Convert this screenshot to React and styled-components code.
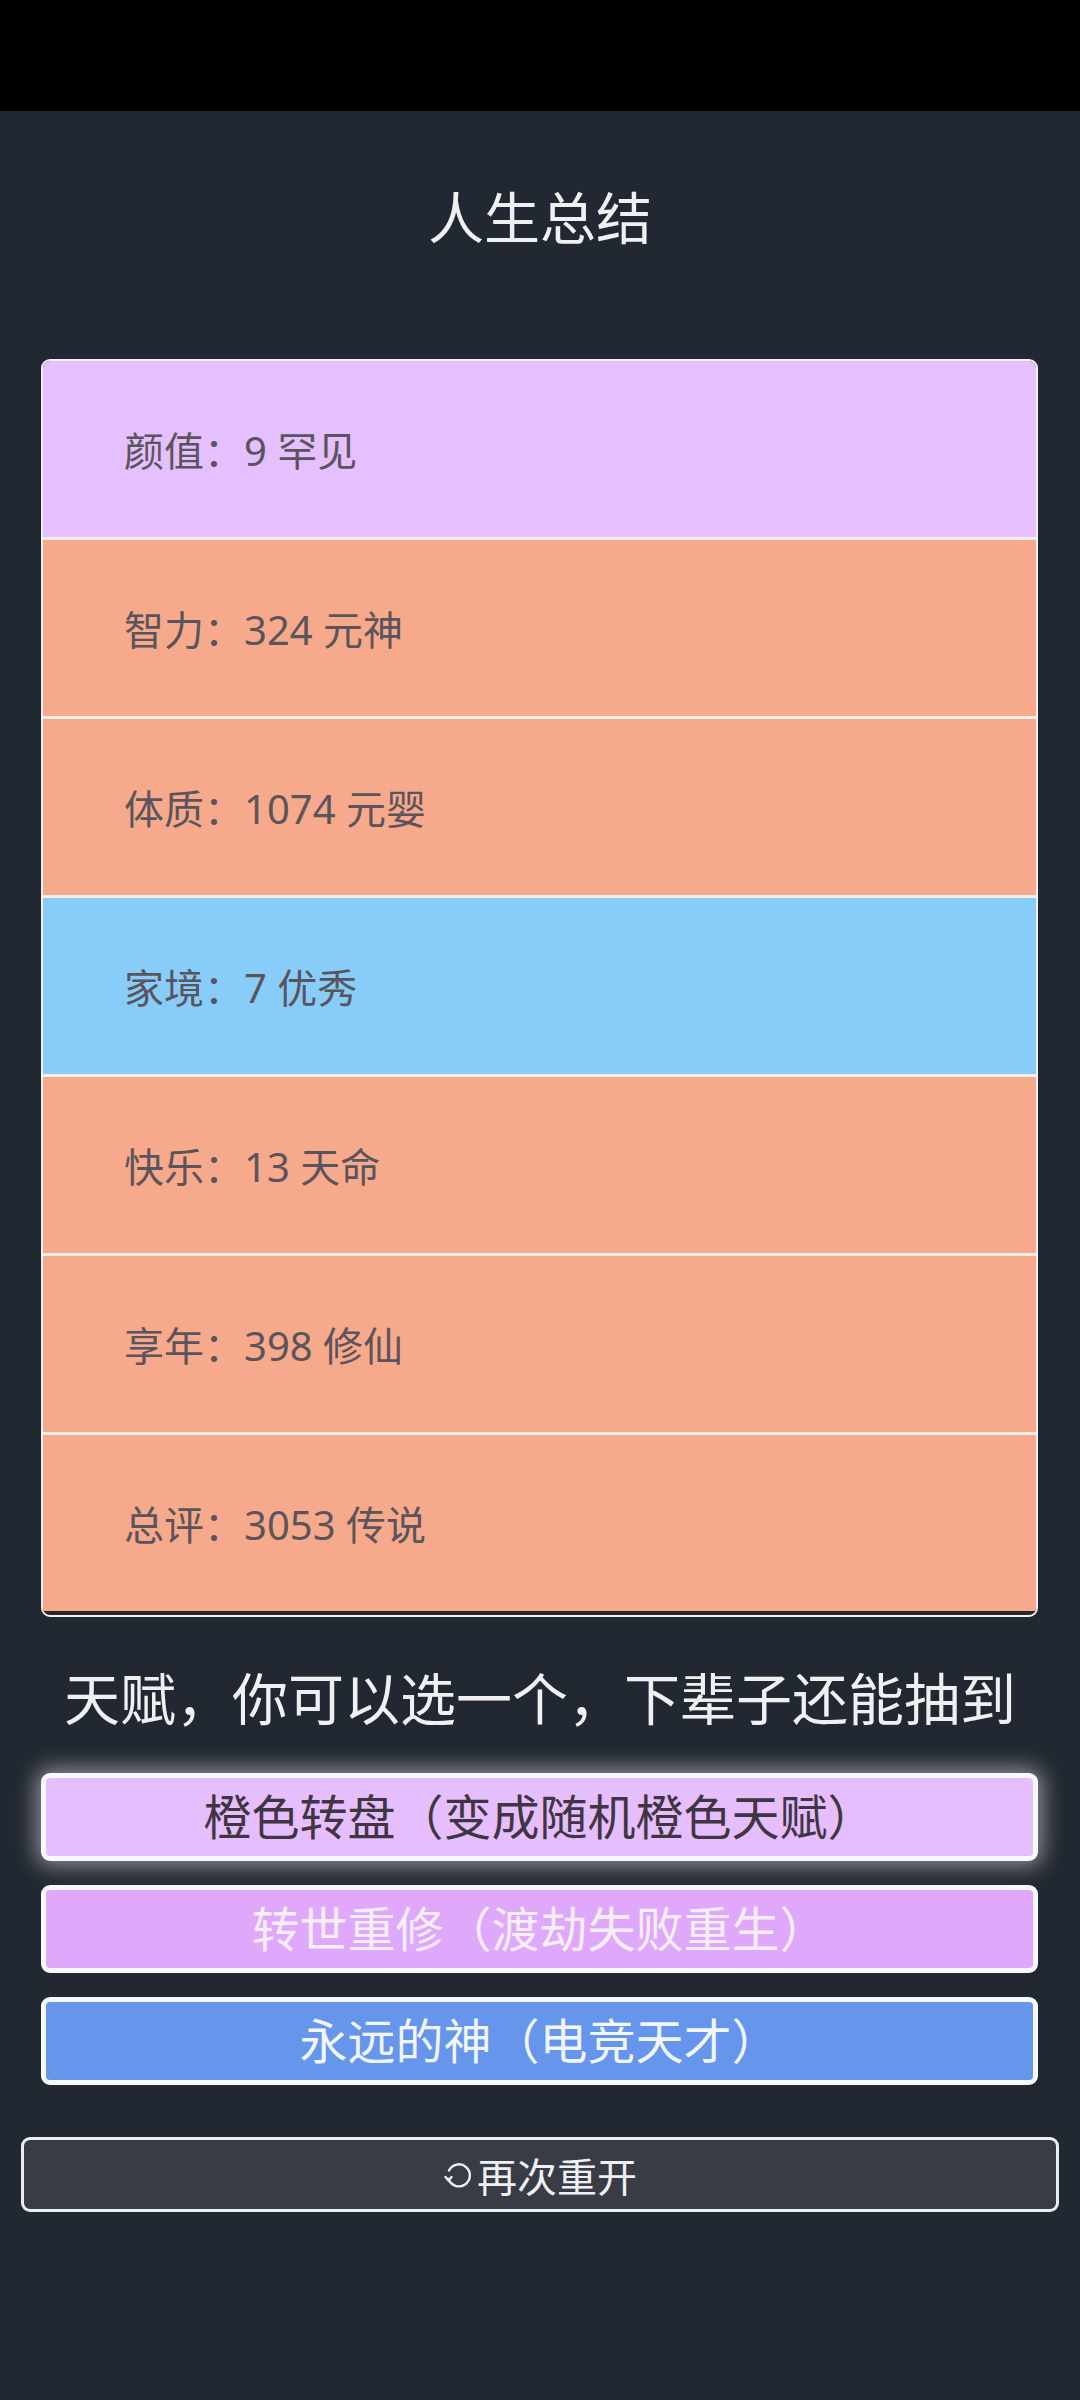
import React from "react";
import styled, { createGlobalStyle } from "styled-components";

const GlobalStyle = createGlobalStyle`
  body {
    margin: 0;
    background: #222831;
    font-family: "Noto Sans", "Noto Sans CJK SC", sans-serif;
  }
`;

const Page = styled.div`
  min-height: 2400px;
  background: #222831;
  display: flex;
  flex-direction: column;
`;

const StatusBar = styled.div`
  height: 111px;
  background: #000;
`;

const Title = styled.h1`
  margin: 74px 0 0;
  height: 64px;
  line-height: 64px;
  text-align: center;
  font-size: 56px;
  font-weight: 400;
  color: #f0f0f2;
`;

const Card = styled.ul`
  list-style: none;
  margin: 110px 42px 0 41px;
  padding: 0 0 4px;
  border: 2px solid #eef0f4;
  border-radius: 9px;
  background: #2a2728;
  overflow: hidden;
`;

const Row = styled.li`
  height: 176px;
  display: flex;
  align-items: center;
  padding-left: 81px;
  background: ${({ $bg }) => $bg};
  color: #5a545c;
  font-size: 40px;
  & + & {
    border-top: 3px solid #f4ede9;
  }
`;

const Subtitle = styled.h2`
  margin: 49px 0 0;
  height: 64px;
  line-height: 64px;
  text-align: center;
  font-size: 56px;
  font-weight: 400;
  color: #f0f0f2;
`;

const Talents = styled.div`
  display: flex;
  flex-direction: column;
  gap: 24px;
  margin: 43px 42px 0 41px;
`;

const Talent = styled.button`
  height: 88px;
  box-sizing: border-box;
  border: 5px solid #f7f8fb;
  border-radius: 9px;
  background: ${({ $bg }) => $bg};
  color: ${({ $fg }) => $fg};
  font-family: inherit;
  font-size: 48px;
  line-height: 1;
  padding: 0;
  box-shadow: ${({ $glow }) =>
    $glow ? "0 0 22px 4px rgba(240, 240, 250, 0.55)" : "none"};
`;

const Restart = styled.button`
  margin: 52px 21px 0;
  height: 75px;
  box-sizing: border-box;
  border: 3px solid #e9eef2;
  border-radius: 9px;
  background: #393c45;
  color: #eef1f4;
  font-family: inherit;
  font-size: 40px;
  display: flex;
  align-items: center;
  justify-content: center;
  gap: 4px;
  padding: 0;
`;

const stats = [
  { label: "颜值", value: "9 罕见", bg: "#e6bffe" },
  { label: "智力", value: "324 元神", bg: "#f7aa8b" },
  { label: "体质", value: "1074 元婴", bg: "#f7aa8b" },
  { label: "家境", value: "7 优秀", bg: "#88cdf9" },
  { label: "快乐", value: "13 天命", bg: "#f7aa8b" },
  { label: "享年", value: "398 修仙", bg: "#f7aa8b" },
  { label: "总评", value: "3053 传说", bg: "#f7aa8b" },
];

const talents = [
  { name: "橙色转盘（变成随机橙色天赋）", bg: "#e6befd", fg: "#3f3641", glow: true },
  { name: "转世重修（渡劫失败重生）", bg: "#e0a8fb", fg: "#f4eef7" },
  { name: "永远的神（电竞天才）", bg: "#6596eb", fg: "#f2f5fa" },
];

function RestartIcon() {
  return (
    <svg width="30" height="28" viewBox="0 0 30 28" fill="none">
      <path
        d="M6 9.5 A11 11 0 1 1 5.5 18"
        stroke="#eef1f4"
        strokeWidth="2.4"
        strokeLinecap="round"
      />
      <path
        d="M2.5 16 L5.5 19.5 L8.5 16"
        stroke="#eef1f4"
        strokeWidth="2.4"
        strokeLinecap="round"
        strokeLinejoin="round"
      />
    </svg>
  );
}

export default function App() {
  return (
    <Page>
      <GlobalStyle />
      <StatusBar />
      <Title>人生总结</Title>
      <Card>
        {stats.map(({ label, value, bg }) => (
          <Row key={label} $bg={bg}>
            {label}：{value}
          </Row>
        ))}
      </Card>
      <Subtitle>天赋，你可以选一个，下辈子还能抽到</Subtitle>
      <Talents>
        {talents.map(({ name, bg, fg, glow }) => (
          <Talent key={name} $bg={bg} $fg={fg} $glow={glow}>
            {name}
          </Talent>
        ))}
      </Talents>
      <Restart>
        <RestartIcon />
        再次重开
      </Restart>
    </Page>
  );
}
